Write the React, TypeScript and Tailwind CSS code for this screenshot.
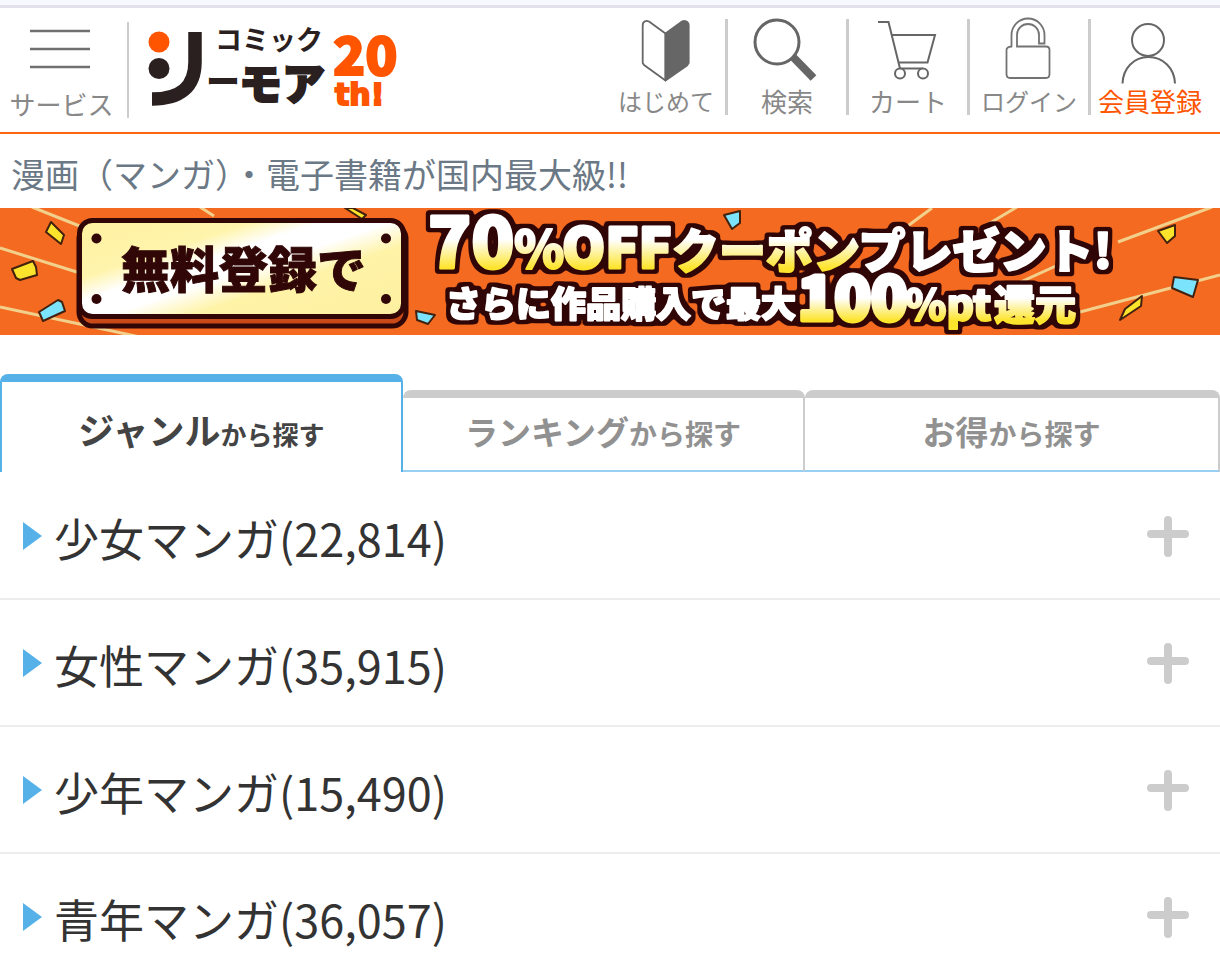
import { useState } from "react";
import type { ReactNode } from "react";

const genres = [
  { name: "少女マンガ", count: "22,814" },
  { name: "女性マンガ", count: "35,915" },
  { name: "少年マンガ", count: "15,490" },
  { name: "青年マンガ", count: "36,057" },
];

const tabs = [
  { strong: "ジャンル", rest: "から探す" },
  { strong: "ランキング", rest: "から探す" },
  { strong: "お得", rest: "から探す" },
];

function BeginnerIcon() {
  return (
    <svg viewBox="0 0 118 68" className="h-[68px] w-full overflow-visible" fill="none" stroke="#666" strokeWidth="1.8" aria-hidden="true">
      <path d="M58.500 14.500 L42 2.500 Q39.500 1.500 38 2.300 Q35.700 3 35.700 6.500 V44 L37 46 L58.500 61.500 Z" strokeLinejoin="round" />
      <path d="M58.500 14.500 L75 2.500 Q77 1.500 79 2.300 Q81.700 3.500 81.700 6.500 V44 L80 46.500 L58.500 61.500 Z" fill="#666" strokeLinejoin="round" />
    </svg>
  );
}

function SearchIcon() {
  return (
    <svg viewBox="0 0 118 68" className="h-[68px] w-full overflow-visible" fill="none" stroke="#666" aria-hidden="true">
      <circle cx="49" cy="23" r="22" strokeWidth="3" />
      <path d="M65.500 38.500 L85.500 59" strokeWidth="8" />
    </svg>
  );
}

function CartIcon() {
  return (
    <svg viewBox="0 0 118 68" className="h-[68px] w-full overflow-visible" fill="none" stroke="#666" strokeWidth="2" aria-hidden="true">
      <path d="M29 3 H39.500 L51 49.500 H74" />
      <path d="M42.500 16 H86 L78.500 43.500 H49.500" />
      <circle cx="51" cy="54.500" r="5" fill="#fff" />
      <circle cx="74" cy="54.500" r="5" fill="#fff" />
    </svg>
  );
}

function LockIcon() {
  return (
    <svg viewBox="0 0 118 68" className="h-[68px] w-full overflow-visible" fill="none" stroke="#737373" strokeWidth="1.8" aria-hidden="true">
      <path d="M41.500 27.500 V16 A16.500 16.500 0 0 1 74.500 16 V24.500 H69 V16 A11 11 0 0 0 47 16 V27.500 H76 Q79.500 27.500 79.500 31 V55 Q79.500 59 76 59 H40 Q36.500 59 36.500 55 V31 Q36.500 28 41.500 27.500 Z" />
    </svg>
  );
}

function MemberIcon() {
  return (
    <svg viewBox="0 0 118 68" className="h-[68px] w-full overflow-visible" fill="none" stroke="#666" strokeWidth="2" aria-hidden="true">
      <circle cx="57" cy="21" r="16" />
      <path d="M31.500 64.500 C32 49 43 38 57.500 38 C72 38 83.500 49 84 64.500" />
    </svg>
  );
}

function Logo() {
  return (
    <svg viewBox="148 30 250 78" className="h-[78px] w-[250px] overflow-visible font-['Noto_Sans_CJK_JP',sans-serif] font-black" role="img" aria-label="コミックシーモア 20th!">
      <circle cx="159" cy="42" r="10.500" fill="#ff5500" />
      <circle cx="159" cy="68.500" r="10.500" fill="#2b2020" />
      <path d="M195 32 V62 Q195 99 152 99" fill="none" stroke="#2b2020" strokeWidth="13.500" />
      <text x="215" y="50" fontSize="27" fill="#2b2020" className="font-bold">コミック</text>
      <text x="206" y="94" fontSize="34" fill="#2b2020">ー</text>
      <text x="239" y="100" fontSize="43" fill="#2b2020" stroke="#2b2020" strokeWidth="2">モア</text>
      <text x="333" y="75" fontSize="53" fill="#ff5500" stroke="#ff5500" strokeWidth="2">20</text>
      <text x="335" y="105" fontSize="30" fill="#ff5500" stroke="#ff5500" strokeWidth="2" className="font-['DejaVu_Sans',sans-serif] font-bold">th!</text>
    </svg>
  );
}

function Banner() {
  return (
    <svg viewBox="0 0 1220 127" className="block h-auto w-full font-['Noto_Sans_CJK_JP',sans-serif] font-black" role="img" aria-label="無料登録で70%OFFクーポンプレゼント! さらに作品購入で最大100%pt還元">
      <defs>
        <linearGradient id="plate" x1="0" y1="0" x2="1" y2="0.9">
          <stop offset="0" stopColor="#fff1a0" />
          <stop offset="0.3" stopColor="#fff4ac" />
          <stop offset="0.42" stopColor="#fff" />
          <stop offset="0.54" stopColor="#fff" />
          <stop offset="0.68" stopColor="#fff3a8" />
          <stop offset="1" stopColor="#fdf0a0" />
        </linearGradient>
        <linearGradient id="upper" gradientUnits="userSpaceOnUse" x1="0" y1="24" x2="0" y2="62">
          <stop offset="0.2" stopColor="#fff" />
          <stop offset="0.95" stopColor="#fde42c" />
        </linearGradient>
        <linearGradient id="lower" gradientUnits="userSpaceOnUse" x1="0" y1="84" x2="0" y2="114">
          <stop offset="0.2" stopColor="#fff" />
          <stop offset="0.95" stopColor="#fde42c" />
        </linearGradient>
        <filter id="outline" filterUnits="userSpaceOnUse" x="400" y="0" width="760" height="127" colorInterpolationFilters="sRGB">
          <feMorphology in="SourceAlpha" operator="dilate" radius="4" />
          <feGaussianBlur stdDeviation="1.500" />
          <feComponentTransfer result="edge">
            <feFuncR type="table" tableValues="0.19 0.19" />
            <feFuncG type="table" tableValues="0.02 0.02" />
            <feFuncB type="table" tableValues="0.02 0.02" />
            <feFuncA type="linear" slope="4" intercept="-1.2" />
          </feComponentTransfer>
          <feMerge>
            <feMergeNode in="edge" />
            <feMergeNode in="SourceGraphic" />
          </feMerge>
        </filter>
      </defs>
      <rect width="1220" height="127" fill="#f36a20" />
      <g stroke="#f2d08c" strokeWidth="3" fill="none">
        <path d="M32 -1 L82 19 M0 40 L80 65 M0 99 L140 129 M200 -1 L214 8" />
        <path d="M932 0 L905 20 M1017 -1 L985 18 M1118 34 L1212 -1 M1012 78 L1058 57 M1080 104 L1220 67" />
      </g>
      <g stroke="#43210f" strokeWidth="2" fill="#fde42c" strokeLinejoin="round">
        <path d="M51 14 L64 27 L61 36 L46 24 Z" />
        <path d="M12 61 L16 70 L20 72 L37 67 L36 59 L33 53 Z" />
        <path d="M345 0 L353 0 L366 7 L362 11 Z" />
        <path d="M1158 23 L1175 17 L1175 28 L1167 35 Z" />
        <path d="M1120 112 L1125 101 L1142 88 L1141 98 Z" />
      </g>
      <g stroke="#43210f" strokeWidth="2" fill="#7be3fb" strokeLinejoin="round">
        <path d="M39 104 L58 92 L62 94 L65 103 L43 113 Z" />
        <path d="M416 103 L435 107 L428 116 L417 112 Z" />
        <path d="M724 7 L740 3 L740 15 L732 21 Z" />
        <path d="M1174 69 L1198 72 L1193 89 L1172 80 Z" />
      </g>
      <rect x="79" y="17" width="327" height="101" rx="14" fill="#c84a18" stroke="#300606" strokeWidth="5" />
      <rect x="79.500" y="12.500" width="324" height="96" rx="13" fill="url(#plate)" stroke="#300606" strokeWidth="5" />
      <g fill="#300606">
        <circle cx="96.500" cy="30.500" r="5" />
        <circle cx="386" cy="30.500" r="5" />
        <circle cx="96.500" cy="91" r="5" />
        <circle cx="386" cy="91" r="5" />
        <text x="121" y="80" fontSize="49" stroke="#300606">無料登録で</text>
      </g>
      <g strokeWidth="2" strokeLinejoin="round" filter="url(#outline)">
        <g fill="url(#upper)" stroke="url(#upper)">
          <text x="428" y="60" fontSize="71" strokeWidth="3">70</text>
          <text x="514" y="60" fontSize="51">%</text>
          <text x="562" y="60" fontSize="55" strokeWidth="3">OFF</text>
          <text x="672" y="60" fontSize="47">クーポン<tspan fill="#fff" stroke="#fff">プレゼント!</tspan></text>
        </g>
        <text x="446" y="109" fontSize="35" fill="#fff" stroke="#fff">さらに作品購入で最大</text>
        <g fill="url(#lower)" stroke="url(#lower)">
          <text x="798" y="112" fontSize="60" strokeWidth="5">100</text>
          <text x="905" y="112" fontSize="42">%pt</text>
          <text x="994" y="112" fontSize="41">還元</text>
        </g>
      </g>
    </svg>
  );
}

function NavItem({ label, icon, size, last }: { label: string; icon: ReactNode; size: string; last?: boolean }) {
  return (
    <a href="#" className={`flex w-[121px] flex-col whitespace-nowrap text-center leading-7 ${size} ${last ? "pr-[3px] text-[#ff5500]" : "border-r-3 border-[#ccc] text-[#888]"}`}>
      {icon}
      <span>{label}</span>
    </a>
  );
}

export default function App() {
  const [active, setActive] = useState(0);
  return (
    <div className="bg-white font-['Noto_Sans_CJK_JP',sans-serif] text-[#333]">
      <div className="h-2 border-b-3 border-[#e2e1ec] bg-[#f8f8ff]" />
      <header className="flex h-[126px] items-start border-b-2 border-[#ff6410]">
        <button type="button" className="mt-[14px] flex w-[129px] shrink-0 flex-col items-center border-r-2 border-[#ccc] pr-1 text-[26px] leading-7 text-[#888]">
          <svg viewBox="0 0 64 68" className="h-[68px] w-16" stroke="#707070" strokeWidth="2.500" aria-hidden="true">
            <path d="M0 9 H60 M0 27 H60 M0 45 H60" />
          </svg>
          <span>サービス</span>
        </button>
        <a href="#" className="mt-[22px] ml-[19px]">
          <Logo />
        </a>
        <nav className="mt-[11px] ml-auto flex pr-2" aria-label="メインメニュー">
          <NavItem label="はじめて" size="text-[24px]" icon={<BeginnerIcon />} />
          <NavItem label="検索" size="text-[26px]" icon={<SearchIcon />} />
          <NavItem label="カート" size="text-[26px]" icon={<CartIcon />} />
          <NavItem label="ログイン" size="text-[24px]" icon={<LockIcon />} />
          <NavItem label="会員登録" size="text-[26px]" icon={<MemberIcon />} last />
        </nav>
      </header>

      <main>
        <h1 className="px-[11px] pt-[10px] pb-1 text-[34px] leading-[60px] text-[#6b7885]">漫画（マンガ）・電子書籍が国内最大級!!</h1>
        <a href="#" className="block">
          <Banner />
        </a>

        <div role="tablist" className="mt-[39px] flex h-[98px] items-end font-bold">
          {tabs.map((tab, i) => {
            const on = i === active;
            return (
              <button
                key={tab.strong}
                type="button"
                role="tab"
                aria-selected={on}
                onClick={() => setActive(i)}
                className={
                  (i === 2 ? "flex-1 " : "w-[33%] ") +
                  (on
                    ? "h-[98px] rounded-t-lg border-x-2 border-t-8 border-[#56b1e9] pt-1 text-[#444]"
                    : "h-[82px] rounded-t-lg border-t-8 border-r-2 border-b-2 border-[#ccc] border-b-[#98d0f5] pb-1 text-[#919191]")
                }
              >
                <span className={on ? "text-[36px]" : "text-[33px]"}>{tab.strong}</span>
                <span className={on ? "text-[26px]" : "text-[28px]"}>{tab.rest}</span>
              </button>
            );
          })}
        </div>

        <ul className="pt-px">
          {genres.map((g) => (
            <li key={g.name} className="flex h-[127px] items-center border-b-2 border-[#ececec] pr-[31px] pl-[23px]">
              <svg viewBox="0 0 19 28" className="h-7 w-[19px] shrink-0" aria-hidden="true">
                <path d="M0 0 L19 14 L0 28 Z" fill="#56b1e9" />
              </svg>
              <a href="#" className="flex-1 pt-1 pl-3 text-[45px] leading-[68px]">
                {g.name}({g.count})
              </a>
              <button type="button" aria-label={`${g.name}を開く`}>
                <svg viewBox="0 0 42 42" className="h-[42px] w-[42px]" stroke="#ccc" strokeWidth="8" strokeLinecap="round" aria-hidden="true">
                  <path d="M4 19 H38 M21 5 V38" />
                </svg>
              </button>
            </li>
          ))}
        </ul>
      </main>
    </div>
  );
}
